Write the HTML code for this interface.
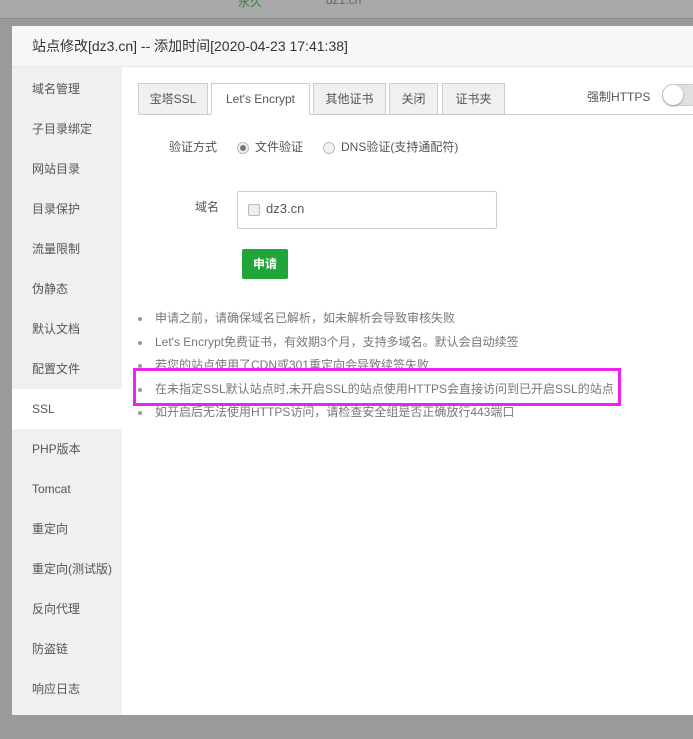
<!DOCTYPE html>
<html><head><meta charset="utf-8"><style>
*{margin:0;padding:0;box-sizing:border-box}
body{width:693px;height:739px;overflow:hidden;background:#9a9a9a;font-family:"Liberation Sans","Noto Sans CJK SC",sans-serif;font-size:12px;color:#555;position:relative}
.top{position:absolute;left:0;top:0;width:693px;height:19px;background:#a9a9a9;border-bottom:1px solid #8c8c8c}
.top span{position:absolute;top:-7px;font-size:12px}
.dlg{position:absolute;left:12px;top:26px;width:700px;height:689px;background:#fff}
.hd{height:41px;background:#f7f7f7;border-bottom:1px solid #e8e8e8;line-height:40px;padding-left:20px;font-size:14px;color:#333}
.side{position:absolute;left:0;top:41px;width:110px;height:648px;background:#f0f0f0;padding-top:2px}
.side div{height:40px;line-height:40px;padding-left:20px;color:#555;font-size:12px}
.side div.on{background:#fff}
.tab{position:absolute;top:57px;height:32px;border:1px solid #ccc;background:#f0f0f0;line-height:30px;text-align:center;color:#555;font-size:12px}
.tab.on{background:#fff;border-bottom-color:#fff;height:32px}
.line{position:absolute;left:126px;top:88px;width:580px;height:1px;background:#ccc}
.abs{position:absolute}
.radio{position:absolute;width:12px;height:12px;border:1px solid #bbb;border-radius:50%;background:#f3f3f3}
ul{position:absolute;left:126px;top:281px;list-style:none}
li{height:23.5px;line-height:23.5px;color:#777;font-size:12px;position:relative;padding-left:17px}
li:before{content:"";position:absolute;left:0;top:10px;width:4px;height:4px;border-radius:50%;background:#999}
</style></head><body>
<div class="top"><span style="left:238px;color:#3a7d3a">永久</span><span style="left:326px;color:#666">dz1.cn</span></div>
<div class="dlg">
<div class="hd">站点修改[dz3.cn] -- 添加时间[2020-04-23 17:41:38]</div>
<div class="side">
<div>域名管理</div><div>子目录绑定</div><div>网站目录</div><div>目录保护</div><div>流量限制</div><div>伪静态</div><div>默认文档</div><div>配置文件</div><div class="on">SSL</div><div>PHP版本</div><div>Tomcat</div><div>重定向</div><div>重定向(测试版)</div><div>反向代理</div><div>防盗链</div><div>响应日志</div>
</div>
<div class="line"></div>
<div class="tab" style="left:126px;width:70px">宝塔SSL</div>
<div class="tab on" style="left:199px;width:99px">Let's Encrypt</div>
<div class="tab" style="left:301px;width:73px">其他证书</div>
<div class="tab" style="left:377px;width:49px">关闭</div>
<div class="tab" style="left:430px;width:63px">证书夹</div>
<div class="abs" style="left:575px;top:62px;color:#555">强制HTTPS</div>
<div class="abs" style="left:650px;top:58px;width:40px;height:22px;border-radius:11px;background:#e0e0e0;border:1px solid #ccc"><div style="width:20px;height:20px;border-radius:50%;background:#fff;box-shadow:0 1px 2px #999"></div></div>
<div class="abs" style="left:157px;top:112px;color:#555">验证方式</div>
<div class="radio" style="left:225px;top:116px"><div style="width:6px;height:6px;border-radius:50%;background:#777;margin:2px"></div></div>
<div class="abs" style="left:243px;top:112px;color:#555">文件验证</div>
<div class="radio" style="left:311px;top:116px"></div>
<div class="abs" style="left:329px;top:112px;color:#555">DNS验证(支持通配符)</div>
<div class="abs" style="left:183px;top:172px;color:#555">域名</div>
<div class="abs" style="left:225px;top:165px;width:260px;height:38px;border:1px solid #ccc;border-radius:2px"></div>
<div class="abs" style="left:236px;top:178px;width:12px;height:12px;border:1px solid #bbb;border-radius:2px;background:#eee"></div>
<div class="abs" style="left:254px;top:175px;color:#555;font-size:13px">dz3.cn</div>
<div class="abs" style="left:230px;top:223px;width:46px;height:30px;background:#20a53a;border-radius:2px;color:#fff;font-weight:bold;line-height:30px;text-align:center">申请</div>
<ul>
<li>申请之前，请确保域名已解析，如未解析会导致审核失败</li>
<li>Let's Encrypt免费证书，有效期3个月，支持多域名。默认会自动续签</li>
<li>若您的站点使用了CDN或301重定向会导致续签失败</li>
<li>在未指定SSL默认站点时,未开启SSL的站点使用HTTPS会直接访问到已开启SSL的站点</li>
<li>如开启后无法使用HTTPS访问，请检查安全组是否正确放行443端口</li>
</ul>
<div class="abs" style="left:121px;top:342px;width:488px;height:38px;border:3px solid #ee22ee"></div>
</div>
</body></html>
